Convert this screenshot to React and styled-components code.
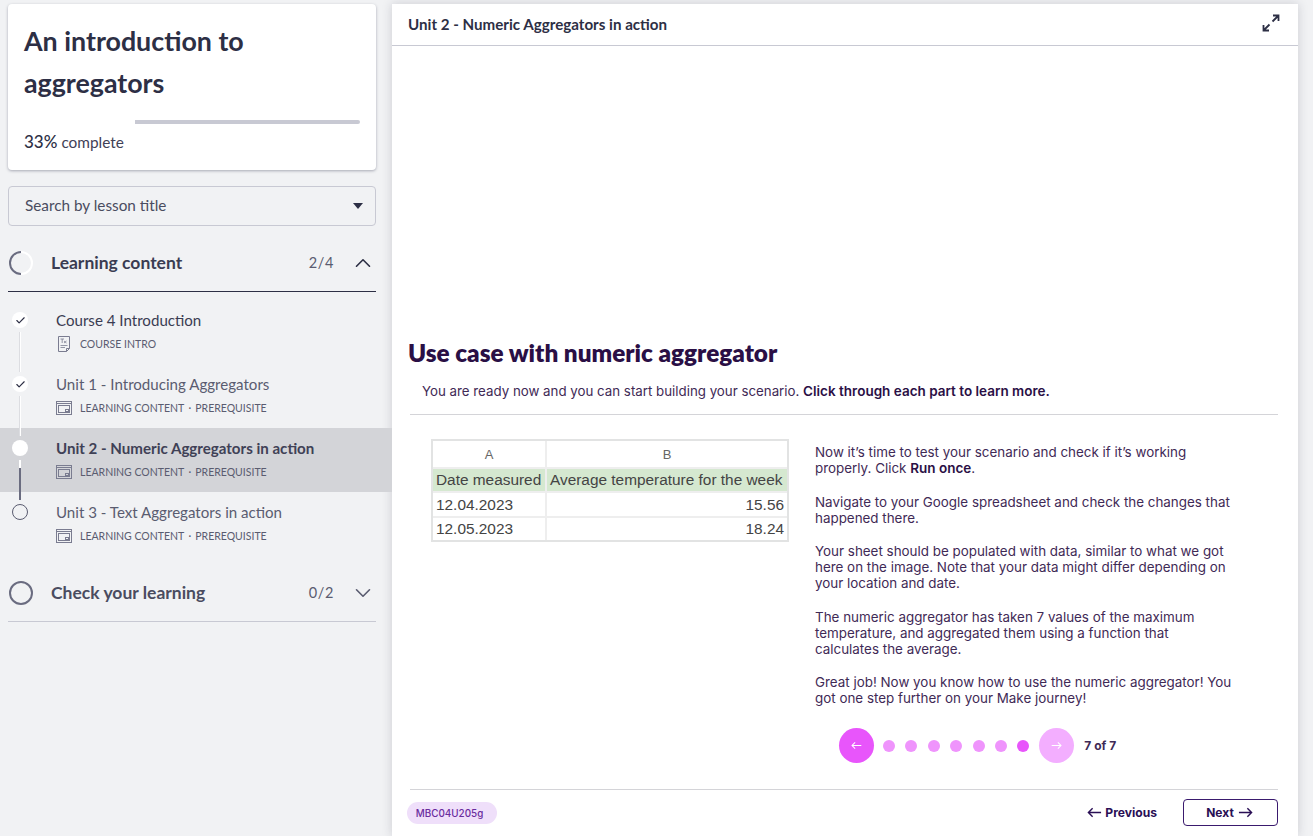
import React from 'react';
import styled, { createGlobalStyle } from 'styled-components';
import { Check, ChevronUp, ChevronDown } from 'lucide-react';

const Global = createGlobalStyle`
  html, body { margin: 0; padding: 0; height: 100%; overflow: hidden; background: #f1f2f4; }
  * { box-sizing: border-box; }
`;
const SANS = `"Lato", "Noto Sans", sans-serif`;
const INTER = `"Inter", "Liberation Sans", sans-serif`;

const Page = styled.div`display: flex; height: 836px; width: 1313px; padding-right: 15px; background: #f1f2f4; font-family: ${SANS}; color: #2d2f45;`;
const Sidebar = styled.aside`width: 392px; flex: none; padding-top: 4px; display: flex; flex-direction: column;`;
const TitleCard = styled.section`margin: 0 16px 16px 8px; height: 166px; padding: 16px 16px 0; background: #fff; border-radius: 4px; box-shadow: 0 1px 3px rgba(30,32,60,.35);`;
const Title = styled.h1`margin: 0; font-size: 26.8px; line-height: 42px; font-weight: 700; color: #2d2f45;`;
const Progress = styled.div`margin-top: 16px; height: 4px; display: flex; border-radius: 2px; overflow: hidden;`;
const ProgressDone = styled.div`width: 33%; background: #fff;`;
const ProgressRest = styled.div`flex: 1; background: #c8c9d3;`;
const ProgressLabel = styled.div`margin-top: 7px; font-size: 15.4px; line-height: 22px; color: #3f4156;`;
const Pct = styled.strong`font-size: 17px; font-weight: 500; color: #2d2f45;`;
const Select = styled.div`margin: 0 16px 0 8px; height: 40px; padding: 0 16px 2px; border: 1px solid #c8c9d3; border-radius: 4px; display: flex; align-items: center; justify-content: space-between; font-size: 15.3px; color: #4a4c60;`;
const Caret = styled.span`width: 0; height: 0; margin-right: -4px; margin-top: 2px; border-left: 5px solid transparent; border-right: 5px solid transparent; border-top: 6px solid #2d2f45;`;
const Section = styled.div`margin: 0 16px 0 8px; height: ${p => p.$h}px; padding: ${p => p.$top || 0}px 0 0 1px; display: flex; align-items: center; border-bottom: 1px solid ${p => p.$dark ? '#2d2f45' : '#c8c9d3'};`;
const SectionTitle = styled.div`flex: 1; margin-left: 18px; font-size: 17.5px; font-weight: 700; color: ${p => p.$muted ? '#4a4c60' : '#3a3c52'};`;
const Count = styled.div`font-size: 14.5px; letter-spacing: .6px; color: #5a5c70; margin-right: 16px;`;
const List = styled.div`padding-top: 8px; margin-bottom: 8px;`;
const Item = styled.div`position: relative; height: 64px; padding: 10px 16px 0 56px; background: ${p => p.$active ? '#d3d4d8' : 'transparent'};`;
const Node = styled.span`position: absolute; left: 12px; top: 12px; width: 16px; height: 16px; border-radius: 50%; background: ${p => p.$open ? 'transparent' : '#fff'}; border: ${p => p.$open ? '1px solid #5a5c70' : 'none'}; display: flex; align-items: center; justify-content: center; color: #2d2f45; z-index: 1;`;
const Connector = styled.span`position: absolute; left: 19px; top: 32px; width: 2px; height: 40px; background: ${p => p.$dark ? 'linear-gradient(#fff 0 8px, #6a6c80 8px)' : 'linear-gradient(90deg, #dcdde1 0 1px, #fff 1px)'}; z-index: 1;`;
const ItemTitle = styled.div`font-size: 15.1px; line-height: 20px; font-weight: ${p => p.$active ? 700 : 400}; color: ${p => p.$active ? '#3f4156' : p.$first ? '#3a3c52' : '#5a5c70'};`;
const Meta = styled.div`margin-top: 6px; display: flex; align-items: center; font-size: 10.5px; line-height: 16px; color: #5a5c70; white-space: nowrap;`;
const MetaIcon = styled.svg`width: 16px; height: 16px; flex: none; margin-right: 8px; color: #7a7c90;`;
const Sep = styled.span`width: 11px; text-align: center;`;

const Main = styled.main`flex: 1; margin-top: 4px; background: #fff; box-shadow: 0 0 10px rgba(40,40,60,.18); display: flex; flex-direction: column; min-width: 0; height: 832px;`;
const Header = styled.header`height: 42px; flex: none; padding: 0 18px 2px 16px; border-bottom: 1px solid #c8c9d3; display: flex; align-items: center; justify-content: space-between; font-size: 15.15px; font-weight: 700; color: #2d2f45;`;
const Body = styled.div`flex: 1; padding: 0 20px 0 18px; display: flex; flex-direction: column; font-family: ${INTER}; color: #3f2a56;`;
const Heading = styled.h2`margin: 290px 0 0 -2px; font-family: ${SANS}; font-size: 24.3px; line-height: 34px; font-weight: 800; color: #2a0f45;`;
const Intro = styled.p`margin: 10px 0 0; padding: 0 12px; height: 35px; font-size: 13.3px; line-height: 22px; color: #3f2a56; border-bottom: 1px solid #d4d4d8; white-space: nowrap;`;
const Strong = styled.strong`font-size: 13.5px; font-weight: 600; color: #2a0f45;`;
const Columns = styled.div`display: flex; padding-top: 24px; height: 315px;`;
const Sheet = styled.div`margin-left: 21px; width: 358px; height: 103px; flex: none; display: grid; grid-template-columns: 114px 240px; grid-template-rows: 28px 24px 25px 22px; border: 2px solid #e2e3e3; font-family: "Liberation Sans", sans-serif; color: #444;`;
const Cell = styled.div`display: flex; align-items: center; padding: 0 3px; white-space: nowrap; overflow: hidden; justify-content: ${p => p.$h ? 'center' : p.$r ? 'flex-end' : 'flex-start'}; background: ${p => p.$g ? '#d5e8d0' : '#fff'}; border-right: ${p => p.$last ? 'none' : '2px solid #eeeeee'}; border-bottom: ${p => p.$end ? 'none' : '2px solid #eeeeee'}; font-size: ${p => p.$h ? '13px' : '15.4px'}; color: ${p => p.$h ? '#666' : '#444'};`;
const Steps = styled.div`margin-left: 26px; width: 424px; padding-top: 5px; font-size: 13.4px; line-height: 16px; color: #3f2a56;`;
const Para = styled.p`margin: 0 0 17.5px; white-space: nowrap;`;
const Pager = styled.div`height: 35px; margin: -2px 0 0 429px; display: flex; align-items: center;`;
const Round = styled.span`width: 35px; height: 35px; border-radius: 50%; flex: none; background: ${p => p.$off ? '#f3aeff' : '#e855fb'}; display: flex; align-items: center; justify-content: center; color: #fff;`;
const Dots = styled.div`display: flex; gap: 10.4px; margin: 0 10px 0 9px;`;
const Dot = styled.span`width: 12px; height: 12px; border-radius: 50%; background: ${p => p.$on ? '#e855fb' : '#ef94fc'};`;
const PageCount = styled.span`margin-left: 10px; font-size: 12px; font-weight: 700; color: #3f2a56;`;
const Footer = styled.footer`margin-top: 26px; height: 47px; border-top: 1px solid #d4d4d8; display: flex; align-items: center; justify-content: space-between;`;
const Code = styled.span`margin-left: -3px; width: 90px; height: 22px; padding-right: 5px; border-radius: 11px; background: #efdffa; color: #6a2c9e; font-size: 9.9px; font-weight: 500; display: flex; align-items: center; justify-content: center;`;
const Actions = styled.div`display: flex; align-items: center; margin-top: -1px;`;
const PrevBtn = styled.button`all: unset; display: flex; align-items: center; gap: 3px; font-family: ${INTER}; font-size: 12.1px; font-weight: 700; color: #2a0f55; margin-right: 26px;`;
const NextBtn = styled.button`all: unset; box-sizing: border-box; width: 95px; height: 27px; border: 1px solid #3a1a6e; border-radius: 4px; display: flex; align-items: center; justify-content: center; gap: 4px; padding-right: 2px; font-family: ${INTER}; font-size: 12px; font-weight: 700; color: #2a0f55;`;
const Chevron = styled.span`display: flex; color: ${p => p.$muted ? '#5a5c70' : '#2d2f45'};`;

const Ring = ({ partial }) => (
  <svg width="24" height="24" viewBox="0 0 24 24" fill="none" style={{ flex: 'none' }}>
    {partial ? <>
      <circle cx="12" cy="12" r="11" stroke="#fff" strokeWidth="2" />
      <path d="M12 1 A11 11 0 0 0 12 23" stroke="#6a6c80" strokeWidth="2" />
    </> : <circle cx="12" cy="12" r="11" stroke="#6a6c80" strokeWidth="2" />}
  </svg>
);
const DocIcon = () => (
  <MetaIcon viewBox="0 0 16 16" fill="none" stroke="currentColor" strokeWidth="1">
    <path d="M2.500.500h11v12l-3 3h-8z" />
    <path d="M10.500 15.500v-3h3" />
    <path d="M4.500 3h3.500M6.200 3v4M8 5l2.500 2M10.500 5L8 7M4.500 9.500h7M4.500 11.500h4.500" strokeWidth=".8" />
  </MetaIcon>
);
const SlideIcon = () => (
  <MetaIcon viewBox="0 0 16 16" fill="none" stroke="currentColor" strokeWidth="1">
    <rect x=".5" y="1.500" width="15" height="13" />
    <path d="M.5 3.500h15" />
    <rect x="2.500" y="5.500" width="11" height="7" />
    <rect x="9.500" y="9.500" width="3" height="2" />
  </MetaIcon>
);
const Expand = () => (
  <svg width="18" height="18" viewBox="0 0 18 18" fill="none" stroke="#2d2f45" strokeWidth="1.8" style={{ marginTop: -1 }}>
    <path d="M11 1.500h5.500V7M16 2l-5.500 5.500M7 16.500H1.500V11M2 16l5.500-5.500" />
  </svg>
);
const Arrow = ({ left, size = 16, w = 1.5 }) => (
  <svg width={size} height={size} viewBox="0 0 16 16" fill="none" stroke="currentColor" strokeWidth={w}>
    {left ? <path d="M15 8H1.500M6 3.500L1.500 8 6 12.500" /> : <path d="M1 8h13.500M10 3.500L14.500 8 10 12.500" />}
  </svg>
);

const items = [
  { t: 'Course 4 Introduction', m: 'COURSE INTRO', doc: true, first: true, done: true, line: true },
  { t: 'Unit 1 - Introducing Aggregators', m: 'LEARNING CONTENT', pre: true, done: true, line: true },
  { t: 'Unit 2 - Numeric Aggregators in action', m: 'LEARNING CONTENT', pre: true, active: true, line: true, dark: true },
  { t: 'Unit 3 - Text Aggregators in action', m: 'LEARNING CONTENT', pre: true, open: true },
];
const paras = [
  <>Now it’s time to test your scenario and check if it’s working<br />properly. Click <Strong>Run once</Strong>.</>,
  <>Navigate to your Google spreadsheet and check the changes that<br />happened there.</>,
  <>Your sheet should be populated with data, similar to what we got<br />here on the image. Note that your data might differ depending on<br />your location and date.</>,
  <>The numeric aggregator has taken 7 values of the maximum<br />temperature, and aggregated them using a function that<br />calculates the average.</>,
  <>Great job! Now you know how to use the numeric aggregator! You<br />got one step further on your Make journey!</>,
];

export default function App() {
  return (
    <Page>
      <Global />
      <Sidebar>
        <TitleCard>
          <Title>An introduction to aggregators</Title>
          <Progress><ProgressDone /><ProgressRest /></Progress>
          <ProgressLabel><Pct>33%</Pct> complete</ProgressLabel>
        </TitleCard>
        <Select>Search by lesson title<Caret /></Select>
        <Section $h={66} $top={8} $dark>
          <Ring partial />
          <SectionTitle>Learning content</SectionTitle>
          <Count>2/4</Count>
          <Chevron><ChevronUp size={26} strokeWidth={1.5} /></Chevron>
        </Section>
        <List>
          {items.map(i => (
            <Item key={i.t} $active={i.active}>
              <Node $open={i.open}>{i.done && <Check size={11} strokeWidth={2.5} />}</Node>
              {i.line && <Connector $dark={i.dark} />}
              <ItemTitle $active={i.active} $first={i.first}>{i.t}</ItemTitle>
              <Meta>
                {i.doc ? <DocIcon /> : <SlideIcon />}
                {i.m}
                {i.pre && <><Sep>·</Sep>PREREQUISITE</>}
              </Meta>
            </Item>
          ))}
        </List>
        <Section $h={58}>
          <Ring />
          <SectionTitle $muted>Check your learning</SectionTitle>
          <Count>0/2</Count>
          <Chevron $muted><ChevronDown size={26} strokeWidth={1.5} /></Chevron>
        </Section>
      </Sidebar>
      <Main>
        <Header>Unit 2 - Numeric Aggregators in action<Expand /></Header>
        <Body>
          <Heading>Use case with numeric aggregator</Heading>
          <Intro>You are ready now and you can start building your scenario. <Strong>Click through each part to learn more.</Strong></Intro>
          <Columns>
            <Sheet>
              <Cell $h>A</Cell><Cell $h $last>B</Cell>
              <Cell $g>Date measured</Cell><Cell $g $last>Average temperature for the week</Cell>
              <Cell>12.04.2023</Cell><Cell $r $last>15.56</Cell>
              <Cell $end>12.05.2023</Cell><Cell $r $last $end>18.24</Cell>
            </Sheet>
            <Steps>{paras.map((p, n) => <Para key={n}>{p}</Para>)}</Steps>
          </Columns>
          <Pager>
            <Round><Arrow left size={11} /></Round>
            <Dots>{[0,1,2,3,4,5,6].map(n => <Dot key={n} $on={n === 6} />)}</Dots>
            <Round $off><Arrow size={11} /></Round>
            <PageCount>7 of 7</PageCount>
          </Pager>
          <Footer>
            <Code>MBC04U205g</Code>
            <Actions>
              <PrevBtn><Arrow left size={15} />Previous</PrevBtn>
              <NextBtn>Next<Arrow size={15} /></NextBtn>
            </Actions>
          </Footer>
        </Body>
      </Main>
    </Page>
  );
}
